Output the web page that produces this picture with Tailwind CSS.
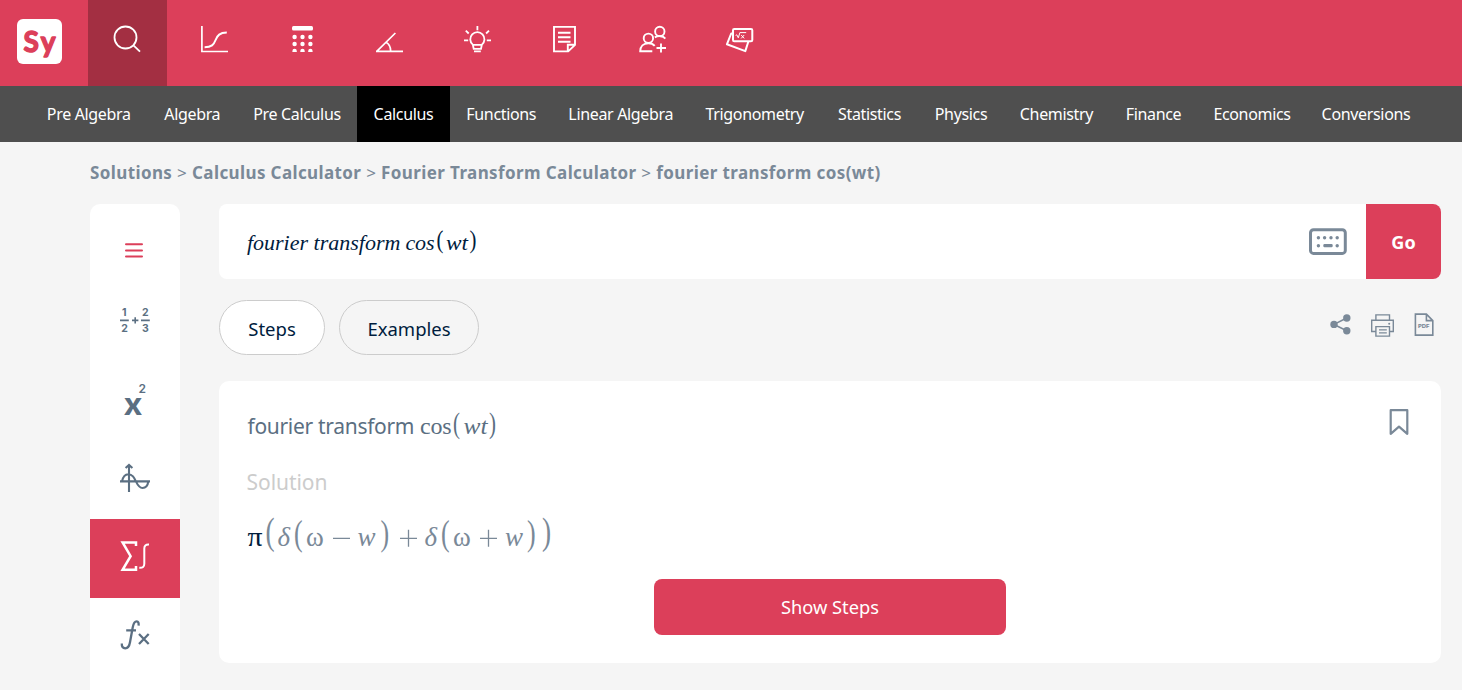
<!DOCTYPE html>
<html lang="en">
<head>
<meta charset="utf-8">
<title>fourier transform cos(wt)</title>
<script src="https://cdn.jsdelivr.net/npm/@tailwindcss/browser@4"></script>
</head>
<body class="h-[690px] w-[1462px] overflow-hidden bg-[#f5f5f5] font-['Noto_Sans',sans-serif]">
<header class="flex h-[86px] bg-[#dc3f5a] text-white">
  <div class="flex w-[88px] shrink-0 pl-[17px] pt-[19px]">
    <svg class="size-[45px]" viewBox="17 19 45 45"><rect x="17" y="19" width="45" height="45" rx="6" fill="#fff"/>
      <text x="23.6" y="52.3" font-family="Lato" font-weight="700" font-size="28" textLength="32" fill="#dc3f5a" stroke="#dc3f5a" stroke-width="1.4" stroke-linejoin="round">Sy</text></svg>
  </div>
  <nav class="flex gap-[8.5px]">
    <svg class="h-[86px] w-[79px] bg-[#a32f42]" viewBox="88 0 79 86" fill="none" stroke="#fff" stroke-width="1.8"><circle cx="125.5" cy="37.5" r="11"/><path d="M133.2 45.2l6.8 6.4"/></svg>
    <svg class="h-[86px] w-[79px]" viewBox="176 0 79 86" fill="none" stroke="#fff" stroke-width="1.7"><path d="M201.9 26v25.5H228"/><path d="M204.6 47.2c7 0 9.2-2.6 11-7.2s4-7.3 11.2-7.4" stroke-width="2"/></svg>
    <svg class="h-[86px] w-[79px]" viewBox="263 0 79 86" fill="#fff"><rect x="292" y="26" width="21" height="4.6" rx="1.5"/><circle cx="294.6" cy="37" r="2.2"/><circle cx="302.5" cy="37" r="2.2"/><circle cx="310.4" cy="37" r="2.2"/><circle cx="294.6" cy="44" r="2.2"/><circle cx="302.5" cy="44" r="2.2"/><circle cx="310.4" cy="44" r="2.2"/><path d="M292.4 52v-1a2.2 2.2 0 0 1 4.4 0v1zM300.3 52v-1a2.2 2.2 0 0 1 4.4 0v1zM308.2 52v-1a2.2 2.2 0 0 1 4.4 0v1z"/></svg>
    <svg class="h-[86px] w-[79px]" viewBox="351 0 79 86" fill="none" stroke="#fff" stroke-width="1.7"><path d="M376 51.4h27M377 51.2l18.4-18.2M386 42.3c3 1.6 4.7 4.8 4.7 9"/></svg>
    <svg class="h-[86px] w-[79px]" viewBox="438 0 79 86" fill="none" stroke="#fff" stroke-width="1.8"><path d="M472.8 44.6a7.1 7.1 0 1 1 9.1 0l-.9 4.2h-7.3zM472.8 44.8h9.2M474 51.4h6.8M477.4 26v4.2M464 40.4h4.2M486.8 40.4h4.2M465.8 30.6l2.9 2.9M489 30.6l-2.9 2.9"/></svg>
    <svg class="h-[86px] w-[79px]" viewBox="526 0 79 86" fill="none" stroke="#fff" stroke-width="1.9"><path d="M554 26.9h21v18l-6.8 6.5H554zM575 44.8h-7.2v6.6M558 32.7h12.5M558 37.2h12.5M558 41.8h12.5"/></svg>
    <svg class="h-[86px] w-[79px]" viewBox="613 0 79 86" fill="none" stroke="#fff" stroke-width="1.9"><circle cx="648.4" cy="38.3" r="4.7"/><circle cx="659.8" cy="31.4" r="4.7"/><path d="M652.3 51.3h-12.1c0-4.8 3.2-8.1 8.2-8.1 2.8 0 4.9.9 6.3 2.6M654.8 37.4c3-1.8 8.3-1.8 10.5 1.2M661 43.5v9M656.5 48h9.5"/></svg>
    <svg class="h-[86px] w-[79px]" viewBox="701 0 79 86" fill="none" stroke="#fff" stroke-width="2" stroke-linejoin="round"><rect x="733" y="28.9" width="19.3" height="12.4" rx="1.3"/><path d="M732.6 33.5h-1.4l-4.3 10.8 18.4 6.8 3-9.4"/><path d="M735.6 35.4l1.2-.6 1.5 3 1.6-5.2h6.3M741.2 35l3 3.4m0-3.4l-3 3.4" stroke-width="1"/></svg>
  </nav>
</header>
<nav class="flex h-14 bg-[#4f4f4f] pl-[30px] text-[16px] leading-14 tracking-[-0.021em] text-white *:shrink-0 *:whitespace-nowrap *:text-center">
  <a class="w-[117.5px]">Pre Algebra</a>
  <a class="w-[89.5px]">Algebra</a>
  <a class="w-[120px]">Pre Calculus</a>
  <a class="w-[93px] bg-black">Calculus</a>
  <a class="w-[102.5px]">Functions</a>
  <a class="w-[136.5px]">Linear Algebra</a>
  <a class="w-[131.5px]">Trigonometry</a>
  <a class="w-[98px]">Statistics</a>
  <a class="w-[85px]">Physics</a>
  <a class="w-[106px]">Chemistry</a>
  <a class="w-[88px]">Finance</a>
  <a class="w-[109px]">Economics</a>
  <a class="w-[119px]">Conversions</a>
</nav>
<div class="h-[62px] whitespace-nowrap pl-[90px] text-[17px] font-bold leading-[62px] tracking-[0.39px] text-[#7a8998]"><span>Solutions</span> <span class="font-normal">&gt;</span> <span>Calculus Calculator</span> <span class="font-normal">&gt;</span> <span>Fourier Transform Calculator</span> <span class="font-normal">&gt;</span> <span>fourier transform cos(wt)</span></div>
<main class="flex gap-[39px] pl-[90px]">
  <aside class="flex h-[486px] w-[90px] shrink-0 flex-col rounded-t-[10px] bg-white">
    <svg class="h-[78px] w-[90px] shrink-0" viewBox="90 204 90 78" stroke="#dc3f5a" stroke-width="2" stroke-linecap="round"><path d="M126 244.3h16M126 250.5h16M126 256.5h16"/></svg>
    <svg class="h-[79px] w-[90px] shrink-0" viewBox="90 282 90 79" fill="#5b6f82" font-family="Inter" font-weight="700" font-size="10.5" text-anchor="middle"><text x="124.2" y="315.5">1</text><text x="124.5" y="332.3">2</text><text x="145.3" y="315.5">2</text><text x="145.3" y="332.3">3</text><path d="M120 320.4h8.8M141 320.4h8.8M132 320.4h6.4M135.2 317.2v6.4" stroke="#5b6f82" stroke-width="1.6"/></svg>
    <svg class="h-[79px] w-[90px] shrink-0" viewBox="90 361 90 79" fill="#5b6f82" font-family="Inter"><text x="123.6" y="414.5" font-size="31" font-weight="700" textLength="19" lengthAdjust="spacingAndGlyphs">x</text><text x="138.5" y="392.7" font-size="12" font-weight="600">2</text></svg>
    <svg class="h-[79px] w-[90px] shrink-0" viewBox="90 440 90 79" fill="none" stroke="#5b6f82" stroke-width="2.1"><path d="M129 465v27M125.6 468l3.4-3 3.4 3M120 481.4h30M122 481.4c1-4.6 3.3-7.2 6.3-7.2 4.2 0 5.8 3.4 7.6 7.2s3.4 6.6 6.6 6.6c3.5 0 5.3-2.6 5.8-6.6"/></svg>
    <svg class="h-[79px] w-[90px] shrink-0 bg-[#dc3f5a]" viewBox="90 519 90 79" fill="none" stroke="#fff" stroke-width="2.5"><path d="M136 546v-3.6h-13.4l8 13.8-8 13.6H136V566"/><path d="M149 544.6c-3.4-.2-4.7 1-4.7 4v15.2c0 3-1.6 4.2-5 4" stroke-width="2"/></svg>
    <svg class="h-[79px] w-[90px] shrink-0" viewBox="90 598 90 79" fill="none" stroke="#5b6f82" stroke-width="2.3"><path d="M121.8 643.5c-.2 3 1 4.8 3.4 4.8 3 0 4.2-2.4 4.8-6l2.7-14.8c.7-4 1.7-6.2 4-6.2 1.6 0 2.2 1.7 1.9 4.4M126.2 630.4H136M139 634l9.7 10M148.7 634l-9.7 10"/></svg>
  </aside>
  <section class="flex w-[1222px] flex-col">
    <div class="flex h-[75px] overflow-hidden rounded-lg bg-white">
      <svg class="h-[75px] w-[1147px]" viewBox="219 204 1147 75" fill="#001c3d" font-family="Liberation Serif" font-size="22">
        <g font-style="italic"><text x="247" y="250" textLength="61">fourier</text><text x="313.5" y="250" textLength="87">transform</text><text x="405.5" y="250" textLength="29">cos</text><text x="446" y="250" textLength="22" lengthAdjust="spacingAndGlyphs">wt</text></g>
        <text transform="translate(436.5 247.8) scale(.8 1)" font-size="26">(</text><text transform="translate(469.5 247.8) scale(.8 1)" font-size="26">)</text>
        <g fill="#7a8998"><rect x="1310.5" y="229.8" width="34.8" height="23.6" rx="3" fill="none" stroke="#7a8998" stroke-width="3"/><circle cx="1318.4" cy="237.8" r="1.7"/><circle cx="1324.6" cy="237.8" r="1.7"/><circle cx="1331" cy="237.8" r="1.7"/><circle cx="1337.2" cy="237.8" r="1.7"/><circle cx="1318.4" cy="245.7" r="1.7"/><circle cx="1337.2" cy="245.7" r="1.7"/><rect x="1323.3" y="244" width="9.4" height="3.3" rx="1.2"/></g>
      </svg>
      <button class="w-[75px] bg-[#dc3f5a] pt-0.5 text-[18px] font-bold text-white">Go</button>
    </div>
    <div class="mt-[21px] flex h-[55px] justify-between">
      <div class="flex gap-3.5 text-[18.5px] text-[#001c3d]">
        <button class="w-[106px] rounded-full border border-[#ccc] bg-white pt-0.5">Steps</button>
        <button class="w-[140px] rounded-full border border-[#ccc] pt-0.5">Examples</button>
      </div>
      <svg class="h-[55px] w-[121px]" viewBox="1320 300 121 55" fill="none" stroke="#7a8998" stroke-width="1.6">
        <path d="M1346.7 318l-12.7 6.4 12.7 6.3"/><g fill="#7a8998" stroke="none"><circle cx="1334" cy="324.4" r="3.7"/><circle cx="1346.8" cy="318" r="3.7"/><circle cx="1346.8" cy="330.8" r="3.7"/><circle cx="1389.2" cy="323.7" r="1"/></g>
        <path d="M1375.9 320.2v-5.3h13.6v5.3M1375.6 331.5h-3.9v-11.2h21.6v11.2h-3.9M1375.9 326.6h13.6v9.5h-13.6zM1379 329.9h7.8M1379 332.9h7.8" stroke-width="1.4"/>
        <path d="M1426.4 314.1h-11v21h17.4v-14.5zM1426.4 314.1v6.5h6.4"/>
        <text x="1418" y="328.2" font-family="Inter" font-weight="800" font-size="5.2" textLength="11.5" lengthAdjust="spacingAndGlyphs" fill="#7a8998" stroke="none">PDF</text>
      </svg>
    </div>
    <article class="mt-[26px] flex h-[282px] flex-col items-center rounded-[10px] bg-white">
      <svg class="h-[198px] w-[1222px] shrink-0" viewBox="219 381 1222 198" fill="#5b6f82" font-family="Liberation Serif">
        <text x="247.5" y="433.7" font-family="Noto Sans" font-size="21" textLength="167">fourier transform</text>
        <text x="420" y="433.7" font-size="24" textLength="31.5">cos</text><text x="463.5" y="433.7" font-size="24" font-style="italic" textLength="24" lengthAdjust="spacingAndGlyphs">wt</text>
        <text transform="translate(453 432.6) scale(.72 1)" font-size="29">(</text><text transform="translate(489 432.6) scale(.72 1)" font-size="29">)</text>
        <text x="246.5" y="490" font-family="Noto Sans" font-size="21" textLength="81" fill="#ccc">Solution</text>
        <text x="247.5" y="546" font-size="27" fill="#001c3d" textLength="15" lengthAdjust="spacingAndGlyphs">π</text>
        <g fill="#7a8998" font-size="27">
          <g font-style="italic"><text x="277.5" y="546">δ</text><text x="357.5" y="546">w</text><text x="424.5" y="546">δ</text><text x="505" y="546">w</text></g>
          <text x="306" y="546">ω</text><text x="453" y="546">ω</text>
          <path d="M333 538.3h17M400 538.3h17M408.5 529.8v17M480 538.3h17M488.5 529.8v17" stroke="#7a8998" stroke-width="1.3"/>
          <text transform="translate(265.5 544) scale(.72 1)" font-size="38">(</text>
          <text transform="translate(294 545) scale(.72 1)" font-size="36">(</text><text transform="translate(380.5 545) scale(.72 1)" font-size="36">)</text>
          <text transform="translate(441 545) scale(.72 1)" font-size="36">(</text><text transform="translate(527 545) scale(.72 1)" font-size="36">)</text>
          <text transform="translate(542 544) scale(.72 1)" font-size="38">)</text>
        </g>
        <path d="M1390.7 410.2h16.6v23.6l-8.3-7.2-8.3 7.2z" fill="none" stroke="#7a8998" stroke-width="2.2" stroke-linejoin="round"/>
      </svg>
      <button class="h-14 w-[352px] shrink-0 rounded-lg bg-[#dc3f5a] text-[18.3px] text-white">Show Steps</button>
    </article>
  </section>
</main>
</body>
</html>
